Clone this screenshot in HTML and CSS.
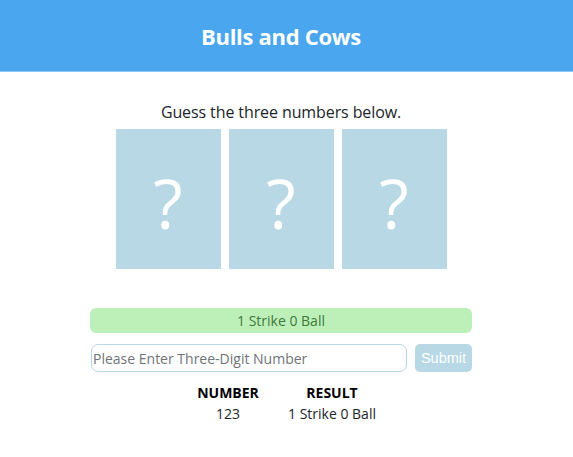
FILE: index.html
```html
<!DOCTYPE html>
<html>
<head>
<meta charset="utf-8">
<link rel="stylesheet" href="styles.css">
</head>
<body>
<header class="header"><h1>Bulls and Cows</h1></header>
<div class="page">
<main class="main">
  <p class="prompt">Guess the three numbers below.</p>
  <div class="cards">
    <div class="card">?</div>
    <div class="card">?</div>
    <div class="card">?</div>
  </div>
  <div class="status">1 Strike 0 Ball</div>
  <form class="form">
    <input class="input" type="text" placeholder="Please Enter Three-Digit Number">
    <button class="submit" type="button">Submit</button>
  </form>
  <table class="history">
    <thead><tr><th class="col-num">NUMBER</th><th class="col-res">RESULT</th></tr></thead>
    <tbody><tr><td>123</td><td>1 Strike 0 Ball</td></tr></tbody>
  </table>
</main>
</div>
</body>
</html>
```
FILE: styles.css
```css
* { box-sizing: border-box; }
body {
  margin: 0;
  font-family: "Open Sans", "Noto Sans", sans-serif;
  color: #212529;
  background: #fff;
}
.header {
  height: 72px;
  background: #4aa6ee;
  border-bottom: 1px solid #8cc6f5;
  display: flex;
  align-items: center;
  justify-content: center;
  padding: 1px 11px 0 0;
}
.header h1 {
  margin: 0;
  color: #fff;
  font-size: 22px;
  font-weight: 700;
  letter-spacing: -0.3px;
}
.page {
  padding-right: 11px;
}
.main {
  width: 382px;
  margin: 0 auto;
  display: flex;
  flex-direction: column;
  align-items: center;
  padding-top: 29px;
}
.prompt {
  margin: 0;
  font-size: 16px;
  line-height: 22px;
  letter-spacing: -0.1px;
}
.cards {
  display: flex;
  gap: 8px;
  margin-top: 6px;
}
.card {
  width: 105px;
  height: 140px;
  background: #b7d8e4;
  color: #fff;
  font-size: 68px;
  display: flex;
  align-items: center;
  justify-content: center;
  line-height: 1;
  padding-top: 8px;
}
.status {
  margin-top: 39px;
  width: 382px;
  height: 25px;
  background: #bdefb9;
  border-radius: 6px;
  color: #3e7a3a;
  font-size: 14px;
  display: flex;
  align-items: center;
  justify-content: center;
}
.form {
  margin: 11px 0 0;
  width: 382px;
  display: flex;
  gap: 8px;
  padding-left: 1px;
}
.input {
  flex: 1;
  height: 28px;
  border: 1px solid #b7d8e4;
  border-radius: 7px;
  padding: 0 1px;
  font-family: "Open Sans", "Noto Sans", sans-serif;
  font-size: 14px;
  color: #333;
}
.input::placeholder { color: #6f7479; }
.submit {
  width: 57px;
  height: 28px;
  border: none;
  border-radius: 5px;
  background: #b7d8e4;
  color: #fff;
  font-family: "Liberation Sans", Arial, sans-serif;
  font-size: 14.5px;
  padding: 0;
}
.history {
  margin-top: 9px;
  align-self: flex-start;
  margin-left: 93px;
  border-collapse: collapse;
  font-size: 14px;
}
.col-num { width: 90px; }
.col-res { width: 118px; }
.history th {
  font-weight: 700;
  padding: 2px 0 0;
  line-height: 20px;
  color: #000;
}
.history td {
  padding: 0;
  text-align: center;
  line-height: 22px;
}
```
